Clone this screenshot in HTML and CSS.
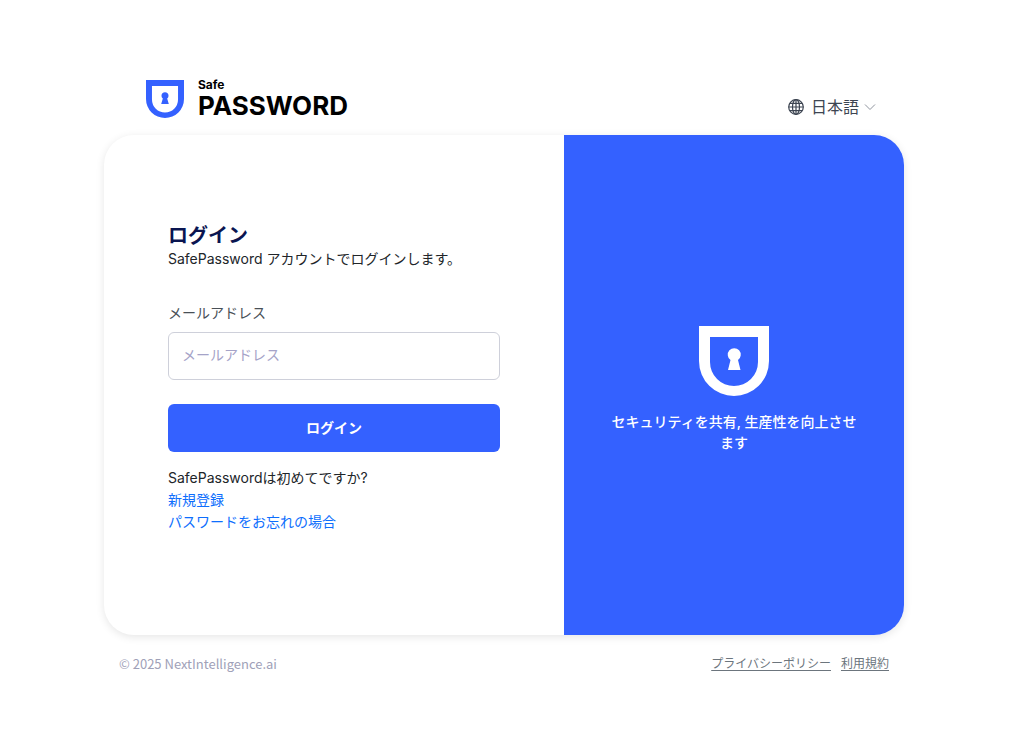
FILE: index.html
```html
<!DOCTYPE html>
<html lang="ja">
<head>
    <meta charset="UTF-8">
    <meta name="viewport" content="width=device-width, initial-scale=1.0">
    <title>SafePassword ログイン</title>
    <link rel="stylesheet" href="styles.css">
</head>
<body>
    <div class="container">
        <header class="header">
            <a href="#" class="logo">
                <svg class="logo_mark" viewBox="0 0 70 70" aria-hidden="true">
                    <path fill-rule="evenodd" d="M0 0H70V35A35 35 0 0 1 0 35ZM11 11V36A24 24 0 0 0 59 36V11Z"/>
                    <path d="M28 44L31 34A6.500 6.500 0 1 1 39 34L42 44Z"/>
                </svg>
                <span class="logo_text">
                    <span class="logo_small">Safe</span>
                    <span class="logo_big">PASSWORD</span>
                </span>
            </a>
            <div class="lang">
                <label for="lang" aria-label="言語">
                    <svg class="globe" viewBox="0 0 16 16" aria-hidden="true">
                        <circle cx="8" cy="8" r="7.3"/>
                        <ellipse cx="8" cy="8" rx="3.5" ry="7.3"/>
                        <path d="M8 .7V15.300M.7 8H15.300M1.700 4.400H14.300M1.700 11.600H14.300"/>
                    </svg>
                </label>
                <select id="lang" class="lang_select">
                    <option selected>日本語</option>
                </select>
                <svg class="arrow" viewBox="0 0 12 8" aria-hidden="true">
                    <path d="M1 1.500L6 6.500L11 1.500"/>
                </svg>
            </div>
        </header>

        <main class="card">
            <section class="login">
                <h1 class="title">ログイン</h1>
                <p class="subtitle">SafePassword アカウントでログインします。</p>
                <form action="#">
                    <label for="email" class="email_label">メールアドレス</label>
                    <input type="email" id="email" class="email" placeholder="メールアドレス">
                    <button type="submit" class="submit">ログイン</button>
                </form>
                <div class="links">
                    <p>SafePasswordは初めてですか?</p>
                    <a href="#">新規登録</a>
                    <a href="#">パスワードをお忘れの場合</a>
                </div>
            </section>
            <section class="banner">
                <svg class="banner_mark" viewBox="0 0 70 70" aria-hidden="true">
                    <path fill-rule="evenodd" d="M0 0H70V35A35 35 0 0 1 0 35ZM11 11V36A24 24 0 0 0 59 36V11Z"/>
                    <path d="M29 44L31.500 34A6.500 6.500 0 1 1 39 34L41.500 44Z"/>
                </svg>
                <p>セキュリティを共有, 生産性を向上させます</p>
            </section>
        </main>

        <footer class="footer">
            <span class="copyright">© 2025 NextIntelligence.ai</span>
            <nav class="policy">
                <a href="#">プライバシーポリシー</a>
                <a href="#">利用規約</a>
            </nav>
        </footer>
    </div>
</body>
</html>
```
FILE: styles.css
```css
* {
    box-sizing: border-box;
}
body {
    margin: 0;
    min-height: 100vh;
    padding: 77px 11px 60px 0;
    background: #fff;
    color: #212529;
    font-family: Inter, "Noto Sans CJK JP", sans-serif;
    font-size: 14px;
    line-height: 22px;
}
h1, p {
    margin: 0;
}
.container {
    width: 100%;
    max-width: 800px;
    margin: 0 auto;
}

/* header */
.header {
    display: flex;
    justify-content: space-between;
    align-items: flex-end;
    padding: 0 28px 16px 42px;
}
.logo {
    display: flex;
    align-items: flex-end;
    gap: 14px;
    color: #000;
    text-decoration: none;
}
.logo_mark {
    width: 38px;
    height: 38px;
    margin-bottom: 1px;
    fill: #3461ff;
}
.logo_text {
    display: flex;
    flex-direction: column;
    font-weight: 700;
}
.logo_small {
    font-size: 12px;
    line-height: 16px;
}
.logo_big {
    font-size: 26px;
    line-height: 26px;
}
.lang {
    display: flex;
    align-items: center;
    color: #3d4552;
}
.lang label {
    display: flex;
}
.globe {
    width: 16px;
    height: 16px;
    fill: none;
    stroke: #3d4552;
    stroke-width: 1.2;
}
.lang_select {
    appearance: none;
    margin: 0 4px 0 7px;
    padding: 0;
    border: 0;
    background: none;
    color: inherit;
    font-family: inherit;
    font-size: 16px;
    line-height: 24px;
}
.arrow {
    width: 12px;
    height: 8px;
    fill: none;
    stroke: #8f949e;
}

/* card */
.card {
    display: flex;
    min-height: 500px;
    border-radius: 30px;
    overflow: hidden;
    box-shadow: 0 2px 8px rgba(0, 0, 0, 0.1);
}
.login {
    flex: 1;
    display: flex;
    flex-direction: column;
    justify-content: center;
    padding: 0 64px 14px;
}
.title {
    color: #0a1551;
    font-size: 20px;
    line-height: 24px;
}
.subtitle {
    margin-bottom: 32px;
}
.email_label {
    display: block;
    margin-bottom: 8px;
    color: #495057;
}
.email,
.submit {
    display: block;
    width: 100%;
    height: 48px;
    border-radius: 6px;
    font-family: inherit;
    font-size: 14px;
}
.email {
    margin-bottom: 24px;
    padding: 0 13px 2px;
    border: 1px solid #ced0da;
    background: #fff;
}
.email::placeholder {
    color: #a5a3c8;
    opacity: 1;
}
.submit {
    padding: 0 0 2px;
    border: 0;
    background: #3461ff;
    color: #fff;
    font-weight: 700;
}
.links {
    display: flex;
    flex-direction: column;
    align-items: flex-start;
    margin-top: 15px;
}
.links a {
    color: #0d6efd;
    text-decoration: none;
}
.banner {
    flex: 0 0 340px;
    display: flex;
    flex-direction: column;
    align-items: center;
    justify-content: center;
    gap: 15px;
    padding: 8px 44px 0;
    background: #3461ff;
    color: #fff;
    font-weight: 500;
    line-height: 21px;
    text-align: center;
}
.banner_mark {
    width: 70px;
    height: 70px;
    fill: #fff;
}

/* footer */
.footer {
    display: flex;
    justify-content: space-between;
    padding: 18px 15px 0;
    font-size: 12px;
}
.copyright {
    color: #a0a1b8;
    font-family: "Noto Sans CJK JP", sans-serif;
    font-size: 13px;
}
.policy {
    display: flex;
    gap: 10px;
}
.policy a {
    color: #6c757d;
    text-underline-offset: 2px;
}
```
